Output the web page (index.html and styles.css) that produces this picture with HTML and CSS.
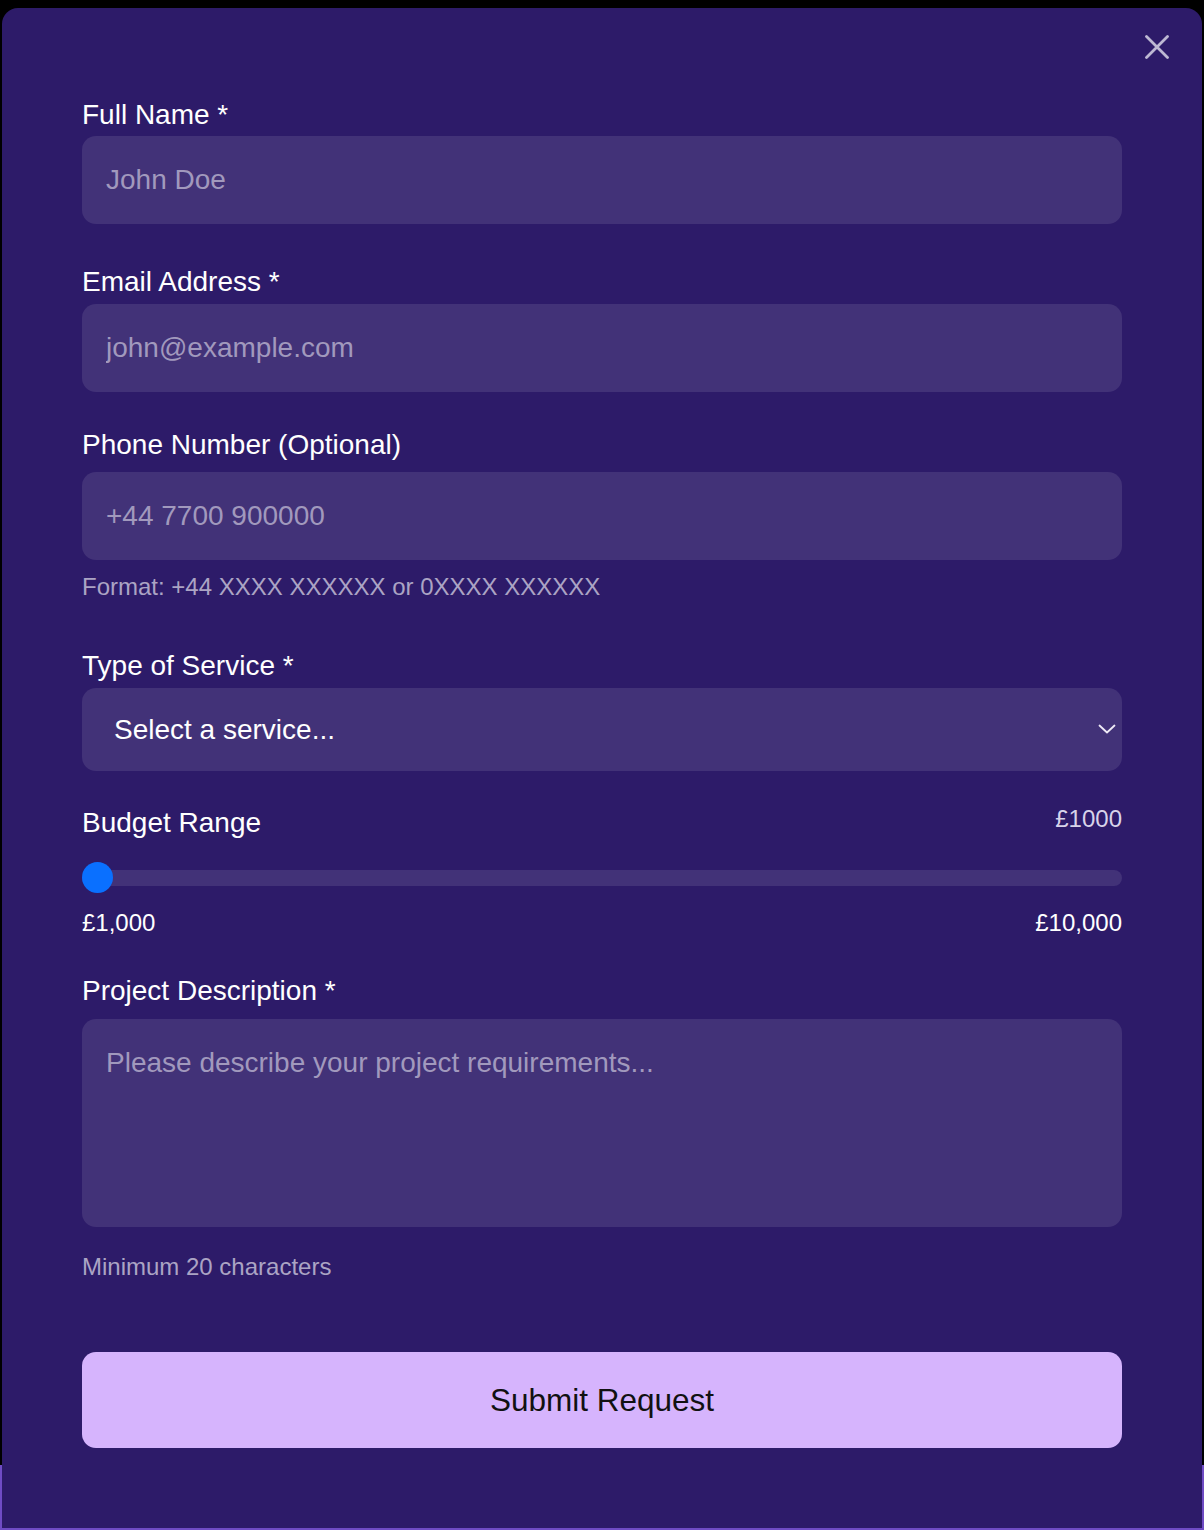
FILE: index.html
```html
<!DOCTYPE html>
<html lang="en">
<head>
<meta charset="utf-8">
<title>Request a Quote</title>
<link rel="stylesheet" href="styles.css">
</head>
<body>
<div class="modal">
  <button class="close" type="button" aria-label="Close">
    <svg width="24" height="24" viewBox="0 0 24 24"><path d="M1.5 1.5 L22.5 22.5 M22.5 1.5 L1.5 22.5" stroke="currentColor" stroke-width="2.8" stroke-linecap="round" fill="none"/></svg>
  </button>
  <form class="form">
    <div class="field field-name">
      <label class="label label-name">Full Name *</label>
      <input class="input" type="text" placeholder="John Doe">
    </div>
    <div class="field field-email">
      <label class="label label-email">Email Address *</label>
      <input class="input" type="email" placeholder="john@example.com">
    </div>
    <div class="field field-phone">
      <label class="label label-phone">Phone Number (Optional)</label>
      <input class="input" type="tel" placeholder="+44 7700 900000">
      <p class="hint hint-phone">Format: +44 XXXX XXXXXX or 0XXXX XXXXXX</p>
    </div>
    <div class="field field-service">
      <label class="label label-service">Type of Service *</label>
      <div class="select-wrap">
        <select class="select">
          <option>Select a service...</option>
        </select>
        <svg class="chevron" width="18" height="10" viewBox="0 0 18 10"><polyline points="1.5,1.5 9,8.5 16.5,1.5" stroke="currentColor" stroke-width="1.8" fill="none" stroke-linecap="round" stroke-linejoin="round"/></svg>
      </div>
    </div>
    <div class="field field-budget">
      <div class="budget-head">
        <label class="label">Budget Range</label>
        <span class="budget-value">£1000</span>
      </div>
      <div class="slider-wrap">
        <input class="range" type="range" min="1000" max="10000" value="1000">
      </div>
      <div class="range-labels">
        <span>£1,000</span>
        <span>£10,000</span>
      </div>
    </div>
    <div class="field field-desc">
      <label class="label label-desc">Project Description *</label>
      <textarea class="textarea" placeholder="Please describe your project requirements..."></textarea>
      <p class="hint hint-desc">Minimum 20 characters</p>
    </div>
    <button class="submit" type="button">Submit Request</button>
  </form>
</div>
</body>
</html>
```

FILE: styles.css
```css
* {
  box-sizing: border-box;
}

html, body {
  margin: 0;
  padding: 0;
}

body {
  width: 1204px;
  height: 1530px;
  overflow: hidden;
  background: linear-gradient(to bottom, #000 0, #000 1465px, #6f4cc4 1465px, #6f4cc4 100%);
  font-family: "Liberation Sans", Arial, Helvetica, sans-serif;
}

.modal {
  position: relative;
  margin: 8px 2px 0;
  height: 1520px;
  background: #2d1b69;
  border-radius: 16px 16px 0 0;
  padding: 90px 80px 0;
}

.close {
  position: absolute;
  top: 27px;
  right: 33px;
  width: 24px;
  height: 24px;
  padding: 0;
  border: 0;
  background: transparent;
  color: #bdb8d3;
  cursor: pointer;
}

.close svg {
  display: block;
}

.form {
  display: flex;
  flex-direction: column;
}

.label {
  display: block;
  font-size: 28px;
  line-height: 32px;
  color: #ffffff;
  font-weight: 400;
  padding-top: 1px;
  height: 32px;
}

.label-name { margin-bottom: 6px; }
.label-email { margin-bottom: 7px; }
.label-phone { margin-bottom: 12px; }
.label-service { margin-bottom: 7px; }
.label-desc { margin-bottom: 13px; }

.field-email { margin-top: 41px; }
.field-phone { margin-top: 36px; }
.field-service { margin-top: 48px; }
.field-budget { margin-top: 35px; }
.field-desc { margin-top: 38px; }

.input {
  display: block;
  width: 100%;
  height: 88px;
  padding: 0 24px;
  border: 0;
  border-radius: 14px;
  background: rgba(255, 255, 255, 0.1);
  color: #ffffff;
  font-family: inherit;
  font-size: 28px;
  outline: none;
}

.input::placeholder,
.textarea::placeholder {
  color: #a199bd;
  opacity: 1;
}

.hint {
  margin: 0;
  font-size: 24px;
  line-height: 28px;
  color: #aba4c4;
}

.hint-phone { margin-top: 13px; }
.hint-desc { margin-top: 26px; }

.select-wrap {
  position: relative;
}

.select {
  display: block;
  width: 100%;
  height: 83px;
  padding: 0 48px 0 32px;
  border: 0;
  border-radius: 14px;
  background: rgba(255, 255, 255, 0.1);
  color: #ffffff;
  font-family: inherit;
  font-size: 28px;
  -webkit-appearance: none;
  appearance: none;
  outline: none;
}

.chevron {
  position: absolute;
  right: 6px;
  top: 36px;
  color: #eeeaf6;
  pointer-events: none;
}

.budget-head {
  display: flex;
  justify-content: space-between;
  align-items: flex-start;
}

.budget-value {
  font-size: 24px;
  line-height: 28px;
  color: #d8d3ea;
  margin-top: -1px;
}

.slider-wrap {
  margin-top: 24px;
  height: 31px;
  display: flex;
  align-items: center;
}

.range {
  -webkit-appearance: none;
  appearance: none;
  width: 100%;
  height: 16px;
  margin: 0;
  padding: 0;
  background: transparent;
  outline: none;
}

.range::-webkit-slider-runnable-track {
  height: 16px;
  border-radius: 8px;
  background: rgba(255, 255, 255, 0.1);
}

.range::-webkit-slider-thumb {
  -webkit-appearance: none;
  appearance: none;
  width: 31px;
  height: 31px;
  border-radius: 50%;
  background: #0a70ff;
  border: 0;
  margin-top: -7.5px;
}

.range-labels {
  margin-top: 15px;
  padding-top: 1px;
  display: flex;
  justify-content: space-between;
  font-size: 24px;
  line-height: 28px;
  height: 28px;
  color: #ffffff;
}

.textarea {
  display: block;
  width: 100%;
  height: 208px;
  padding: 28px 24px 26px;
  border: 0;
  border-radius: 14px;
  background: rgba(255, 255, 255, 0.1);
  color: #ffffff;
  font-family: inherit;
  font-size: 28px;
  line-height: 32px;
  resize: none;
  outline: none;
}

.submit {
  margin-top: 71px;
  height: 96px;
  width: 100%;
  border: 0;
  border-radius: 14px;
  background: #d6b4fd;
  color: #111111;
  font-family: inherit;
  font-size: 31.5px;
  cursor: pointer;
}
```
